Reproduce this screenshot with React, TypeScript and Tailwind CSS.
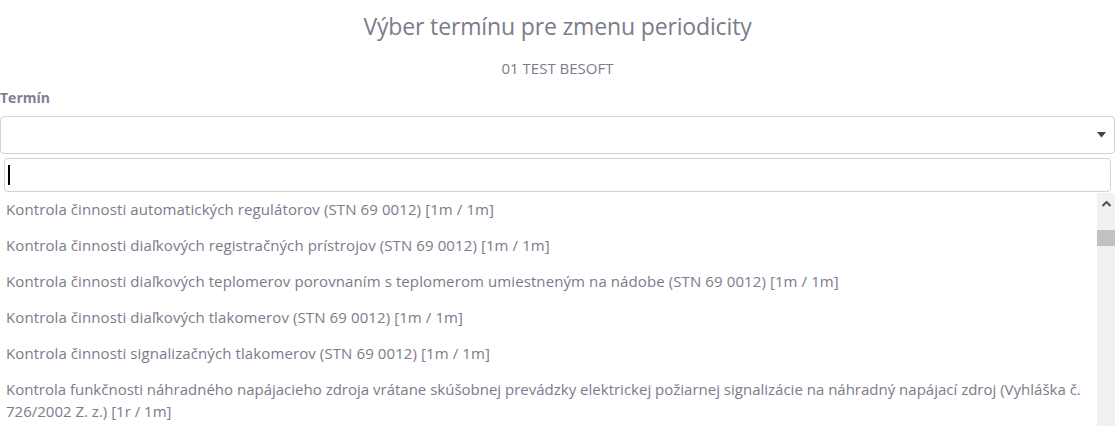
import React from "react";

const options: React.ReactNode[] = [
  "Kontrola činnosti automatických regulátorov (STN 69 0012) [1m / 1m]",
  "Kontrola činnosti diaľkových registračných prístrojov (STN 69 0012) [1m / 1m]",
  "Kontrola činnosti diaľkových teplomerov porovnaním s teplomerom umiestneným na nádobe (STN 69 0012) [1m / 1m]",
  "Kontrola činnosti diaľkových tlakomerov (STN 69 0012) [1m / 1m]",
  "Kontrola činnosti signalizačných tlakomerov (STN 69 0012) [1m / 1m]",
];

export default function App() {
  return (
    <div
      className="w-[1115px] h-[426px] overflow-hidden bg-white text-[#7b7b8c]"
      style={{ fontFamily: '"Open Sans", "Noto Sans", sans-serif' }}
    >
      <div className="pt-[11px] text-center text-[23px] leading-[30px] tracking-[-0.15px]">
        Výber termínu pre zmenu periodicity
      </div>
      <div className="mt-[17px] text-center text-[15px] leading-[20px]">01 TEST BESOFT</div>
      <div className="mt-[10px] text-[14px] leading-[20px] font-bold text-[#80808f]">Termín</div>
      <div className="mt-[8px] h-[38px] border border-[#cfd3d8] rounded-[4px] flex items-center justify-end pr-[8px]">
        <svg width="9" height="6" viewBox="0 0 9 6">
          <path d="M0 0 L9 0 L4.5 5.5 Z" fill="#444" />
        </svg>
      </div>
      <div className="pt-[4px] px-[4px] pb-[1px]">
        <div className="h-[34px] border border-[#cfd3d8] rounded-[4px] flex items-center pl-[3px]">
          <div className="w-[2px] h-[20px] bg-black" />
        </div>
      </div>
      <div className="flex">
        <div className="flex-1 min-w-0 text-[15px] leading-[22px] tracking-[0.1px]">
          {options.map((o, i) => (
            <div key={i} className="px-[6px] pt-[5px] pb-[9px] whitespace-nowrap">
              {o}
            </div>
          ))}
          <div className="px-[6px] pt-[5px] pb-[9px] whitespace-nowrap tracking-normal">
            Kontrola funkčnosti náhradného napájacieho zdroja vrátane skúšobnej prevádzky elektrickej požiarnej signalizácie na náhradný napájací zdroj (Vyhláška č.
            <br />
            726/2002 Z. z.) [1r / 1m]
          </div>
        </div>
        <div className="w-[18px] shrink-0 h-[234px] bg-[#f1f1f1] flex flex-col items-center">
          <svg className="mt-[8px]" width="9" height="6" viewBox="0 0 9 6">
            <path d="M0.5 5 L4.5 1 L8.5 5" stroke="#505050" strokeWidth="2" fill="none" />
          </svg>
          <div className="mt-[23px] w-[18px] h-[16px] bg-[#c1c1c1]" />
        </div>
      </div>
    </div>
  );
}
